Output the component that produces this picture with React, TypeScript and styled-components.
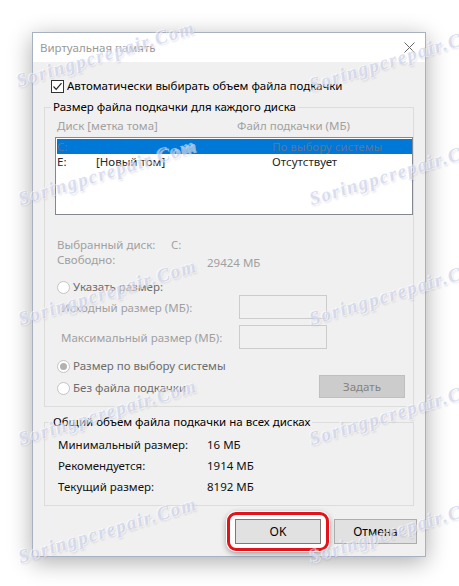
import React from "react";
import styled, { createGlobalStyle } from "styled-components";

const GlobalStyle = createGlobalStyle`
  html, body { margin: 0; padding: 0; background: #ffffff; }
  body {
    font-family: "Noto Sans", "Segoe UI", "Liberation Sans", sans-serif;
    font-size: 11.5px;
    color: #000;
  }
`;

const Page = styled.div`
  position: relative;
  width: 459px;
  height: 586px;
  box-sizing: border-box;
  padding: 32px 0 0 32px;
  overflow: hidden;
`;

const Window = styled.div`
  width: 394px;
  box-sizing: border-box;
  border: 1px solid #a7b1c0;
  background: #f0f0f0;
  box-shadow: 0 5px 22px rgba(0, 0, 0, 0.33);
  display: flex;
  flex-direction: column;
`;

const TitleBar = styled.div`
  height: 29px;
  background: #ffffff;
  display: flex;
  align-items: center;
  justify-content: space-between;
  padding: 0 10px 0 7px;
`;

const Title = styled.span`
  color: #999999;
`;

const CloseIcon = styled.svg`
  width: 11px;
  height: 11px;
  display: block;
`;

const Body = styled.div`
  display: flex;
  flex-direction: column;
  padding: 16px 11px 12px 11px;
`;

const CheckRow = styled.label`
  display: flex;
  align-items: center;
  gap: 3px;
  height: 16px;
  line-height: 16px;
  margin-left: 7px;
  color: #000;
`;

const CheckBox = styled.span`
  width: 13px;
  height: 13px;
  box-sizing: border-box;
  border: 1px solid #333333;
  background: #ffffff;
  display: flex;
  align-items: center;
  justify-content: center;
`;

const GroupBox = styled.fieldset<{ $mt: number }>`
  margin: ${(p) => p.$mt}px 0 0 0;
  padding: 0;
  border: 1px solid #dcdcdc;
  min-width: 0;
`;

const Legend = styled.legend`
  margin-left: 6px;
  padding: 0 2px;
  line-height: 16px;
  color: #000;
`;

const GroupInner = styled.div<{ $pad: string }>`
  display: flex;
  flex-direction: column;
  padding: ${(p) => p.$pad};
`;

const HeaderRow = styled.div`
  display: flex;
  line-height: 16px;
  padding-left: 2px;
  color: #a0a0a0;
`;

const Cell = styled.span<{ $w?: number }>`
  flex: ${(p) => (p.$w ? `0 0 ${p.$w}px` : "1 1 auto")};
  white-space: nowrap;
`;

const ListBox = styled.div`
  margin-top: 3px;
  width: 358px;
  height: 78px;
  box-sizing: border-box;
  border: 1px solid #828790;
  background: #ffffff;
  padding: 1px 0 1px 1px;
`;

const ListRow = styled.div<{ $selected?: boolean }>`
  display: flex;
  height: 15px;
  line-height: 15px;
  background: ${(p) => (p.$selected ? "#0078d7" : "transparent")};
  color: ${(p) => (p.$selected ? "#5f7796" : "#262626")};
`;

const InfoBlock = styled.div`
  margin-top: 22px;
  display: flex;
  flex-direction: column;
`;

const InfoRow = styled.div`
  display: flex;
  line-height: 15px;
  padding-left: 2px;
  color: #a0a0a0;
`;

const ShiftedValue = styled.span`
  padding-top: 3px;
`;

const RadioRow = styled.div<{ $mt: number }>`
  display: flex;
  align-items: center;
  gap: 3px;
  height: 16px;
  line-height: 16px;
  margin-top: ${(p) => p.$mt}px;
  padding-left: 2px;
  color: #6d6d6d;
`;

const Radio = styled.span<{ $checked?: boolean }>`
  width: 13px;
  height: 13px;
  box-sizing: border-box;
  border-radius: 50%;
  border: 1px solid #c4c4c4;
  background: #ffffff;
  display: flex;
  align-items: center;
  justify-content: center;
  &::after {
    content: "";
    display: ${(p) => (p.$checked ? "block" : "none")};
    width: 7px;
    height: 7px;
    border-radius: 50%;
    background: #b2b2b2;
  }
`;

const SizeRow = styled.div<{ $mt: number }>`
  display: flex;
  align-items: center;
  height: 24px;
  margin-top: ${(p) => p.$mt}px;
  padding-left: 6px;
  color: #a0a0a0;
`;

const SizeLabel = styled.span`
  flex: 0 0 178px;
  white-space: nowrap;
`;

const SizeInput = styled.span`
  width: 88px;
  height: 24px;
  box-sizing: border-box;
  border: 1px solid #cccccc;
  background: #f0f0f0;
`;

const LastRow = styled.div`
  display: flex;
  align-items: center;
  justify-content: space-between;
  height: 23px;
  margin-top: 1px;
  padding-right: 8px;
`;

const LastRadio = styled(RadioRow)`
  padding-top: 3px;
`;

const DisabledButton = styled.span`
  width: 86px;
  height: 23px;
  box-sizing: border-box;
  border: 1px solid #bfbfbf;
  background: #cccccc;
  color: #838383;
  display: flex;
  align-items: center;
  justify-content: center;
`;

const SummaryRow = styled.div`
  display: flex;
  height: 21px;
  line-height: 21px;
  color: #111111;
`;

const Footer = styled.div`
  position: relative;
  z-index: 0;
  display: flex;
  justify-content: flex-end;
  gap: 13px;
  margin: 13px -3px 0 0;
`;

const Button = styled.span<{ $w: number; $default?: boolean }>`
  position: relative;
  width: ${(p) => p.$w}px;
  height: 25px;
  box-sizing: border-box;
  border: 1px solid ${(p) => (p.$default ? "#7a7a7a" : "#adadad")};
  background: #e1e1e1;
  color: #000;
  font-size: 12px;
  display: flex;
  align-items: center;
  justify-content: center;
  ${(p) =>
    p.$default
      ? `
  &::before {
    content: "";
    position: absolute;
    left: -9px;
    right: -9px;
    top: -8px;
    bottom: -8px;
    z-index: -1;
    border: 3px solid #e3121b;
    border-radius: 9px;
    background: #ffffff;
    box-shadow: 0 0 0 1px #ffffff, 0 2px 6px rgba(0, 0, 0, 0.45);
  }`
      : ""}
`;

const WatermarkLayer = styled.div`
  position: absolute;
  inset: 0;
  pointer-events: none;
  z-index: 10;
`;

const Watermark = styled.span<{ $x: number; $y: number }>`
  position: absolute;
  left: ${(p) => p.$x}px;
  top: ${(p) => p.$y - 24}px;
  transform-origin: 0 100%;
  transform: rotate(-17deg);
  font-family: "Liberation Serif", serif;
  font-style: italic;
  font-weight: bold;
  font-size: 19px;
  letter-spacing: 1.5px;
  white-space: nowrap;
  color: rgba(165, 175, 220, 0.38);
  text-shadow: 1px 1px 0 rgba(255, 255, 255, 0.55), -1px -1px 0 rgba(255, 255, 255, 0.55),
    1px 2px 2px rgba(90, 90, 130, 0.18);
`;

const marks: Array<[number, number]> = [
  [20, 94],
  [313, 98],
  [22, 212],
  [313, 212],
  [22, 332],
  [313, 332],
  [22, 452],
  [313, 452],
  [22, 570],
  [313, 570],
];

export default function App() {
  return (
    <Page>
      <GlobalStyle />
      <Window>
        <TitleBar>
          <Title>Виртуальная память</Title>
          <CloseIcon viewBox="0 0 11 11">
            <path d="M0.5 0.5 L10.5 10.5 M10.5 0.5 L0.5 10.5" stroke="#666" strokeWidth="1" fill="none" />
          </CloseIcon>
        </TitleBar>
        <Body>
          <CheckRow>
            <CheckBox>
              <svg width="11" height="11" viewBox="0 0 11 11">
                <path d="M1.5 5.5 L4.2 8.3 L9.5 2.2" stroke="#222" strokeWidth="1.2" fill="none" />
              </svg>
            </CheckBox>
            Автоматически выбирать объем файла подкачки
          </CheckRow>

          <GroupBox $mt={5}>
            <Legend>Размер файла подкачки для каждого диска</Legend>
            <GroupInner $pad="3px 0 8px 10px">
              <HeaderRow>
                <Cell $w={180}>Диск [метка тома]</Cell>
                <Cell>Файл подкачки (МБ)</Cell>
              </HeaderRow>
              <ListBox>
                <ListRow $selected>
                  <Cell $w={39}>C:</Cell>
                  <Cell $w={176}></Cell>
                  <Cell>По выбору системы</Cell>
                </ListRow>
                <ListRow>
                  <Cell $w={39}>E:</Cell>
                  <Cell $w={176}>[Новый том]</Cell>
                  <Cell>Отсутствует</Cell>
                </ListRow>
              </ListBox>
              <InfoBlock>
                <InfoRow>
                  <Cell $w={114}>Выбранный диск:</Cell>
                  <Cell>C:</Cell>
                </InfoRow>
                <InfoRow>
                  <Cell $w={150}>Свободно:</Cell>
                  <ShiftedValue>29424 МБ</ShiftedValue>
                </InfoRow>
              </InfoBlock>
              <RadioRow $mt={9}>
                <Radio />
                Указать размер:
              </RadioRow>
              <SizeRow $mt={0}>
                <SizeLabel>Исходный размер (МБ):</SizeLabel>
                <SizeInput />
              </SizeRow>
              <SizeRow $mt={6}>
                <SizeLabel>Максимальный размер (МБ):</SizeLabel>
                <SizeInput />
              </SizeRow>
              <RadioRow $mt={9}>
                <Radio $checked />
                Размер по выбору системы
              </RadioRow>
              <LastRow>
                <LastRadio $mt={0}>
                  <Radio />
                  Без файла подкачки
                </LastRadio>
                <DisabledButton>Задать</DisabledButton>
              </LastRow>
            </GroupInner>
          </GroupBox>

          <GroupBox $mt={7}>
            <Legend>Общий объем файла подкачки на всех дисках</Legend>
            <GroupInner $pad="4px 0 8px 13px">
              <SummaryRow>
                <Cell $w={149}>Минимальный размер:</Cell>
                <Cell>16 МБ</Cell>
              </SummaryRow>
              <SummaryRow>
                <Cell $w={149}>Рекомендуется:</Cell>
                <Cell>1914 МБ</Cell>
              </SummaryRow>
              <SummaryRow>
                <Cell $w={149}>Текущий размер:</Cell>
                <Cell>8192 МБ</Cell>
              </SummaryRow>
            </GroupInner>
          </GroupBox>

          <Footer>
            <Button $w={86} $default>
              OK
            </Button>
            <Button $w={83}>Отмена</Button>
          </Footer>
        </Body>
      </Window>
      <WatermarkLayer>
        {marks.map(([x, y], i) => (
          <Watermark key={i} $x={x} $y={y}>
            Soringpcrepair.Com
          </Watermark>
        ))}
      </WatermarkLayer>
    </Page>
  );
}
